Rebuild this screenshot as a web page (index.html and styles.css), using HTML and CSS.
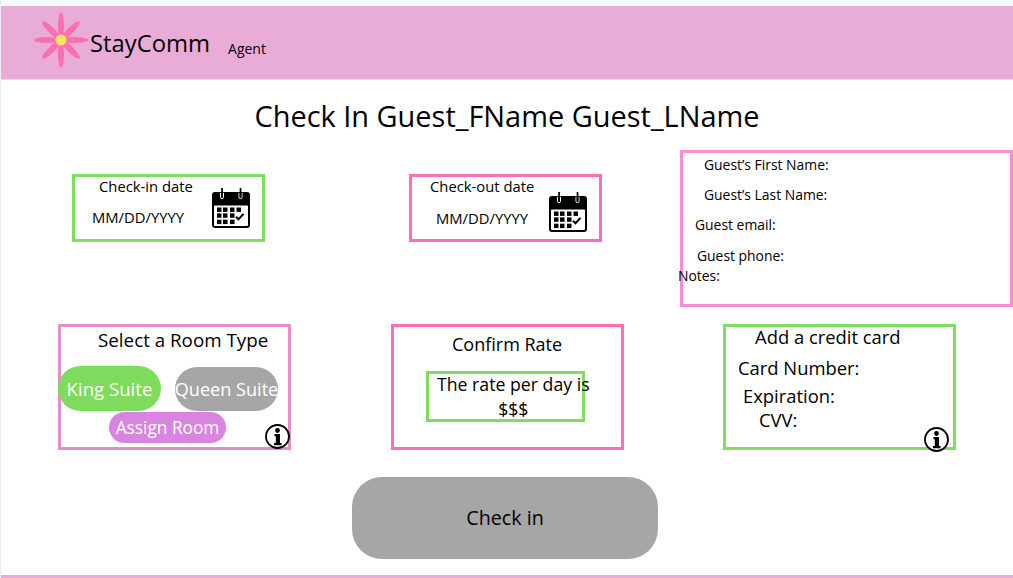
FILE: index.html
```html
<!DOCTYPE html>
<html lang="en">
<head>
<meta charset="utf-8">
<title>StayComm Check In</title>
<link rel="stylesheet" href="styles.css">
</head>
<body>
<svg class="defs" width="0" height="0" aria-hidden="true">
  <defs>
    <symbol id="cal" viewBox="0 0 38 41" preserveAspectRatio="none">
      <path d="M3 4h32a3 3 0 0 1 3 3v31a3 3 0 0 1-3 3H3a3 3 0 0 1-3-3V7a3 3 0 0 1 3-3z" fill="#000"/>
      <rect x="2" y="18" width="34" height="21" rx="1" fill="#fff"/>
      <path d="M8.500 5v4.500a1.500 1.500 0 0 0 3 0V5M27 5v4.500a1.500 1.500 0 0 0 3 0V5" fill="none" stroke="#fff" stroke-width="1"/>
      <rect x="9.200" y="0" width="1.700" height="9" fill="#000"/>
      <rect x="27.700" y="0" width="1.700" height="9" fill="#000"/>
      <g fill="#000">
        <rect x="5" y="20" width="4.500" height="4.500"/><rect x="11" y="20" width="4.500" height="4.500"/><rect x="18" y="20" width="4.500" height="4.500"/><rect x="24.500" y="20" width="4.500" height="4.500"/>
        <rect x="5" y="26" width="4.500" height="4.500"/><rect x="11" y="26" width="4.500" height="4.500"/><rect x="18" y="26" width="4.500" height="4.500"/>
        <rect x="5" y="32.500" width="4.500" height="4.500"/><rect x="11" y="32.500" width="4.500" height="4.500"/><rect x="18" y="32.500" width="4.500" height="4.500"/>
      </g>
      <path d="M24 29.500l2.500 2.500 5-5.500" fill="none" stroke="#000" stroke-width="2"/>
    </symbol>
    <symbol id="info" viewBox="0 0 25 25">
      <circle cx="12.500" cy="12.500" r="11.500" fill="#fff" stroke="#000" stroke-width="1.800"/>
      <circle cx="12.500" cy="6.500" r="2.400" fill="#000"/>
      <path d="M9.500 10h5.500v9h1.500v2.200h-7.500V19h1.800v-6.800H9.500z" fill="#000"/>
    </symbol>
  </defs>
</svg>
<div class="topstrip"></div>
<header class="header">
  <svg class="logo" width="54" height="56" viewBox="0 0 54 56" aria-hidden="true">
    <g fill="#fb6fb0">
      <ellipse cx="27" cy="14" rx="3" ry="13.500"/>
      <ellipse cx="27" cy="42" rx="3" ry="13.500"/>
      <ellipse cx="13.500" cy="28" rx="13.500" ry="3"/>
      <ellipse cx="40.500" cy="28" rx="13.500" ry="3"/>
      <ellipse cx="27" cy="14" rx="3.200" ry="13" transform="rotate(45 27 28) translate(0 1)"/>
      <ellipse cx="27" cy="14" rx="3.200" ry="13" transform="rotate(135 27 28) translate(0 1)"/>
      <ellipse cx="27" cy="14" rx="3.200" ry="13" transform="rotate(225 27 28) translate(0 1)"/>
      <ellipse cx="27" cy="14" rx="3.200" ry="13" transform="rotate(315 27 28) translate(0 1)"/>
    </g>
    <circle cx="27" cy="28" r="5.500" fill="#fde25f"/>
  </svg>
  <span class="brand">StayComm</span>
  <span class="role">Agent</span>
</header>
<main class="main">
  <h1 class="title">Check In Guest_FName Guest_LName</h1>
  <div class="row row-one">
    <section class="box date-box green">
      <div class="date-label in-label">Check-in date</div>
      <div class="date-value in-value">MM/DD/YYYY</div>
      <svg class="cal in-cal"><use href="#cal"/></svg>
    </section>
    <section class="box date-box pink out-box">
      <div class="date-label out-label">Check-out date</div>
      <div class="date-value out-value">MM/DD/YYYY</div>
      <svg class="cal out-cal"><use href="#cal"/></svg>
    </section>
    <section class="box guest-box">
      <div class="guest-line g-first">Guest’s First Name:</div>
      <div class="guest-line g-last">Guest’s Last Name:</div>
      <div class="guest-line g-email">Guest email:</div>
      <div class="guest-line g-phone">Guest phone:</div>
      <div class="guest-line g-notes">Notes:</div>
    </section>
  </div>
  <div class="row row-two">
    <section class="box card room-box">
      <div class="card-title room-title">Select a Room Type</div>
      <div class="pills">
        <span class="pill pill-king">King Suite</span>
        <span class="pill pill-queen">Queen Suite</span>
      </div>
      <span class="pill pill-assign">Assign Room</span>
      <svg class="info room-info"><use href="#info"/></svg>
    </section>
    <section class="box card pink rate-box">
      <div class="card-title rate-title">Confirm Rate</div>
      <div class="box green rate-inner"><div class="rate-text">The rate per day is<br>$$$</div></div>
    </section>
    <section class="box card green credit-box">
      <div class="card-title credit-title">Add a credit card</div>
      <div class="credit-line c-number">Card Number:</div>
      <div class="credit-line c-exp">Expiration:</div>
      <div class="credit-line c-cvv">CVV:</div>
      <svg class="info credit-info"><use href="#info"/></svg>
    </section>
  </div>
  <div class="action"><button class="checkin" type="button">Check in</button></div>
</main>
<div class="bottomband"></div>
</body>
</html>
```
FILE: styles.css
```css
* { box-sizing: border-box; }
html, body { margin: 0; padding: 0; }
body {
  width: 1013px;
  height: 578px;
  overflow: hidden;
  background: #fff;
  border-left: 1px solid #eceef2;
  color: #000;
  font-family: "Open Sans", "Noto Sans", sans-serif;
  display: flex;
  flex-direction: column;
}
.defs { position: absolute; }
.topstrip { height: 6px; background: #f8f9fb; margin-left: -1px; flex: none; }
.header {
  height: 74px;
  flex: none;
  background: #e9acd6;
  display: flex;
  align-items: flex-start;
  padding: 6px 0 0 33px;
  border-bottom: 1px solid #f3d6ea;
}
.logo { flex: none; }
.brand { font-size: 23.800px; line-height: 32px; margin: 15px 0 0 2px; }
.role { font-size: 14px; line-height: 20px; margin: 27px 0 0 18px; }
.main { flex: 1; position: relative; }
.title {
  margin: 0;
  padding-top: 16px;
  height: 70px;
  font-size: 28.950px;
  line-height: 39px;
  font-weight: 400;
  text-align: center;
}
.row { display: flex; align-items: flex-start; }
.box { border: 3px solid; position: relative; background: #fff; }
.green { border-color: #80dd5d; }
.pink { border-color: #fb6fb8; }
.row-one { height: 174px; padding-left: 71px; }
.date-box { width: 193px; height: 68px; margin-top: 24px; }
.out-box { margin-left: 144px; }
.date-label, .date-value { font-size: 14.800px; line-height: 20px; }
.in-label { margin-top: -1px; padding-left: 24px; }
.in-value { padding: 11px 0 0 17px; }
.out-label { margin-top: -1px; padding-left: 18px; }
.out-value { padding: 12px 0 0 24px; }
.cal { position: absolute; width: 38px; height: 40px; }
.in-cal { left: 137px; top: 11px; }
.out-cal { left: 137px; top: 15px; }
.guest-box {
  width: 333px;
  height: 157px;
  margin-left: 78px;
  border-color: #f48ed6;
}
.guest-line { font-size: 13.900px; line-height: 19px; position: relative; }
.g-first { margin: 2px 0 0 21px; }
.g-last { margin: 11px 0 0 21px; }
.g-email { margin: 11px 0 0 12px; }
.g-phone { margin: 12px 0 0 14px; }
.g-notes { margin: 1px 0 0 -5px; }
.row-two { padding-left: 57px; }
.card { width: 233px; height: 126px; }
.room-box { border-color: #e58ccb; }
.rate-box { margin-left: 100px; }
.credit-box { margin-left: 99px; }
.card-title { font-size: 18px; line-height: 25px; }
.room-title { padding: 1px 0 0 37px; font-size: 18.800px; }
.rate-title { padding: 5px 0 0 58px; }
.credit-title { padding-left: 29px; font-size: 18.400px; margin-top: -3px; }
.pills { display: flex; margin: 13px 0 0 -3px; }
.pill { display: flex; align-items: center; justify-content: center; color: #fff; font-size: 18.600px; white-space: nowrap; }
.pill-king { width: 103px; height: 45px; background: #7fdb5b; border-radius: 23px; }
.pill-queen { width: 103px; height: 44px; margin: 1px 0 0 14px; background: #a6a6a6; border-radius: 22px; font-size: 18.100px; }
.pill-assign { width: 117px; height: 31px; margin: 1px 0 0 48px; background: #d984e0; border-radius: 16px; font-size: 17.300px; }
.info { position: absolute; width: 25px; height: 25px; }
.room-info { right: -2px; bottom: -2px; }
.credit-info { right: 4px; bottom: -5px; }
.rate-inner {
  width: 159px;
  height: 51px;
  margin: 14px 0 0 32px;
  font-size: 17.700px;
  line-height: 25px;
}
.rate-text { width: max-content; margin: -2px 0 0 8px; text-align: center; }
.credit-line { font-size: 18.400px; line-height: 25px; }
.c-number { margin: 6px 0 0 12px; }
.c-exp { margin: 3px 0 0 17px; }
.c-cvv { margin: -1px 0 0 33px; }
.action { display: flex; padding: 27px 0 0 351px; }
.checkin {
  width: 306px;
  height: 82px;
  padding: 0 0 2px;
  border: 0;
  border-radius: 30px;
  background: #a6a6a6;
  color: #000;
  font-family: inherit;
  font-size: 19.700px;
}
.bottomband { height: 3px; background: #e9acd6; flex: none; box-shadow: 0 -14px 20px #f8fafa; }
```
